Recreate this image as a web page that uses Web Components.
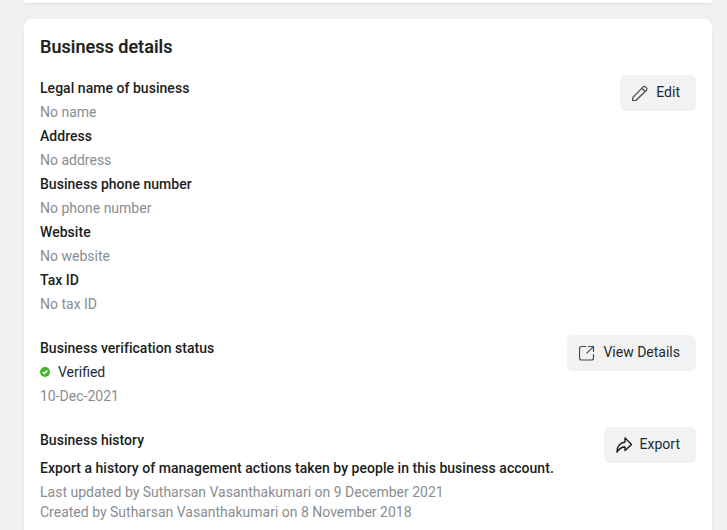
<!DOCTYPE html>
<html>
<head>
<meta charset="utf-8">
<title>Business details</title>
<style>
  html, body { margin: 0; height: 100%; overflow: hidden; }
  body { background: #f0f0f0; font: 14px/24px Roboto, "Liberation Sans", sans-serif; color: #1c1e21; }
</style>
</head>
<body>
<settings-page>
  <info-card></info-card>
  <info-card heading="Business details">
    <info-section>
      <info-field label="Legal name of business" value="No name"></info-field>
      <info-field label="Address" value="No address"></info-field>
      <info-field label="Business phone number" value="No phone number"></info-field>
      <info-field label="Website" value="No website"></info-field>
      <info-field label="Tax ID" value="No tax ID"></info-field>
      <action-button slot="action" icon="edit">Edit</action-button>
    </info-section>
    <info-section>
      <info-field label="Business verification status">
        <status-line>Verified</status-line>
      </info-field>
      <info-field value="10-Dec-2021"></info-field>
      <action-button slot="action" icon="open">View Details</action-button>
    </info-section>
    <info-section>
      <info-field label="Business history"></info-field>
      <info-field class="lead" label="Export a history of management actions taken by people in this business account."></info-field>
      <info-note>Last updated by Sutharsan Vasanthakumari on 9 December 2021</info-note>
      <info-note>Created by Sutharsan Vasanthakumari on 8 November 2018</info-note>
      <action-button slot="action" icon="share">Export</action-button>
    </info-section>
  </info-card>
</settings-page>

<script>
class SettingsPage extends HTMLElement{
  constructor(){
    super();
    this.attachShadow({mode:"open"}).innerHTML = `
      <style>
        :host{display:flex;flex-direction:column;gap:16px;padding:0 15px 0 24px;}
      </style>
      <slot></slot>`;
  }
}

class InfoCard extends HTMLElement{
  connectedCallback(){
    const heading = this.getAttribute("heading");
    const root = this.shadowRoot || this.attachShadow({mode:"open"});
    root.innerHTML = `
      <style>
        :host{display:block;background:#fff;box-shadow:0 1px 2px rgba(0,0,0,.08);}
        :host(:not([heading])){height:3px;border-radius:0 0 8px 8px;}
        :host([heading]){border-radius:8px;padding:16px;}
        h2{margin:0 0 17px;font-size:18px;line-height:24px;font-weight:500;letter-spacing:.04px;-webkit-text-stroke:.2px #1c1e21;color:#1c1e21;}
        .body{display:flex;flex-direction:column;gap:20px;}
      </style>
      ${heading ? `<h2>${heading}</h2>` : ""}
      <div class="body"><slot></slot></div>`;
  }
}

class InfoSection extends HTMLElement{
  constructor(){
    super();
    this.attachShadow({mode:"open"}).innerHTML = `
      <style>
        :host{display:flex;justify-content:space-between;align-items:flex-start;}
        .main{flex:1;min-width:0;}
        .side{flex:none;margin-top:-1px;}
      </style>
      <div class="main"><slot></slot></div>
      <div class="side"><slot name="action"></slot></div>`;
  }
}

class InfoField extends HTMLElement{
  connectedCallback(){
    const label = this.getAttribute("label");
    const value = this.getAttribute("value");
    const root = this.shadowRoot || this.attachShadow({mode:"open"});
    root.innerHTML = `
      <style>
        :host{display:block;}
        :host(.lead){margin-top:4px;}
        .label{font-weight:500;letter-spacing:.035px;color:#1c1e21;white-space:nowrap;}
        .value{color:#8a8d91;}
      </style>
      ${label ? `<div class="label">${label}</div>` : ""}
      ${value ? `<div class="value">${value}</div>` : ""}
      <slot></slot>`;
  }
}

class InfoNote extends HTMLElement{
  constructor(){
    super();
    this.attachShadow({mode:"open"}).innerHTML = `
      <style>
        :host{display:block;color:#8a8d91;line-height:20px;}
        :host(:first-of-type){margin-top:2px;}
      </style>
      <slot></slot>`;
  }
}

class StatusLine extends HTMLElement{
  constructor(){
    super();
    this.attachShadow({mode:"open"}).innerHTML = `
      <style>
        :host{display:flex;align-items:center;gap:8px;color:#1c2b33;}
        svg{width:10px;height:10px;flex:none;}
      </style>
      <svg viewBox="0 0 10 10"><circle cx="5" cy="5" r="5" fill="#42b72a"/><path d="M2.6 5.1 4.3 6.8 7.4 3.6" fill="none" stroke="#fff" stroke-width="1.5"/></svg>
      <slot></slot>`;
  }
}

const ICONS = {
  edit:`<path stroke="#444950" d="M.9 12.4 11.2 1.9a1.6 1.6 0 0 1 2.2 0l1.1 1a1.6 1.6 0 0 1 0 2.3L4.1 15.3l-3 .6a.4.4 0 0 1-.5-.5zM9.9 3.3l3.4 3.2"/>`,
  open:`<path stroke="#444950" d="M6.5 1.5H2.5a2 2 0 0 0-2 2V13a2 2 0 0 0 2 2H12.5a2 2 0 0 0 2-2V9.5M9.5 1.5H14.5V6.5M14.2 1.8 7.8 8.2"/>`,
  share:`<path stroke="#111" stroke-width="1.3" d="M9 1 15.6 7.5 9 13.6V10C5.6 10 3.2 11.4 1 15.2.7 10 3.6 5.6 9 5Z"/>`
};

class ActionButton extends HTMLElement{
  connectedCallback(){
    const icon = ICONS[this.getAttribute("icon")] || "";
    const root = this.shadowRoot || this.attachShadow({mode:"open"});
    root.innerHTML = `
      <style>
        :host{display:inline-flex;align-items:center;gap:8px;height:36px;padding:0 16px 0 12px;box-sizing:border-box;
          background:#f2f2f2;border-radius:6px;color:#1c2b33;white-space:nowrap;}
        svg{width:16px;height:16px;flex:none;fill:none;stroke-width:1.2;stroke-linejoin:round;stroke-linecap:round;}
        span{position:relative;top:-1px;}
      </style>
      <svg viewBox="0 0 16 16">${icon}</svg>
      <span><slot></slot></span>`;
  }
}

customElements.define("settings-page",SettingsPage);
customElements.define("info-card",InfoCard);
customElements.define("info-section",InfoSection);
customElements.define("info-field",InfoField);
customElements.define("info-note",InfoNote);
customElements.define("status-line",StatusLine);
customElements.define("action-button",ActionButton);
</script>
</body>
</html>
